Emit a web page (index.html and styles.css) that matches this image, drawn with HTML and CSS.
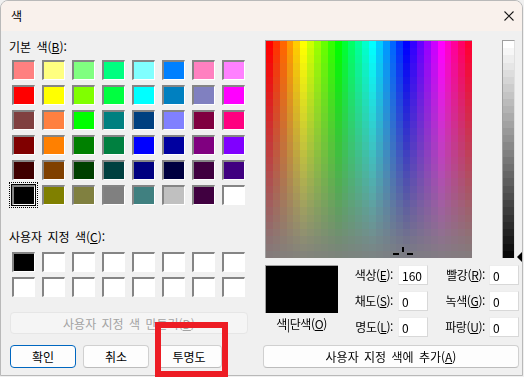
FILE: index.html
```html
<!DOCTYPE html>
<html lang="ko">
<head>
  <meta charset="UTF-8" />
  <title>색</title>
  <link rel="stylesheet" href="styles.css">
</head>
<body>
  <div class="dialog">
    <div class="titlebar">
      <span class="title">색</span>
      <svg class="close" width="10" height="10" viewBox="0 0 10 10">
        <path d="M0.5 0.5 L9.5 9.5 M9.5 0.5 L0.5 9.5" stroke="#1a1a1a" stroke-width="1.1" fill="none" />
      </svg>
    </div>

    <div class="content">
      <!-- left side: swatches -->
      <div class="left">
        <div class="label">기본 색(<u>B</u>):</div>
        <div id="basic" class="swatches basic"></div>
        <div class="label custom-label">사용자 지정 색(<u>C</u>):</div>
        <div id="custom" class="swatches custom"></div>
        <button class="btn wide" disabled>사용자 지정 색 만들기(<u>D</u>)</button>
        <div class="actions">
          <button class="btn default">확인</button>
          <button class="btn">취소</button>
          <button class="btn">투명도</button>
        </div>
      </div>

      <!-- right side: spectrum and values -->
      <div class="right">
        <div class="picker">
          <canvas id="spectrum" class="spectrum" width="206" height="217"></canvas>
          <div class="lum-wrap">
            <canvas id="lum" class="lum" width="11" height="217"></canvas>
            <span class="arrow"></span>
          </div>
        </div>

        <div class="values">
          <div class="preview-col">
            <div class="preview"></div>
            <div class="solid">색|단색(<u>O</u>)</div>
          </div>
          <div class="fields">
            <label>색상(<u>E</u>):</label><input type="text" value="160" />
            <label>빨강(<u>R</u>):</label><input type="text" value="0" />
            <label>채도(<u>S</u>):</label><input type="text" value="0" />
            <label>녹색(<u>G</u>):</label><input type="text" value="0" />
            <label>명도(<u>L</u>):</label><input type="text" value="0" />
            <label>파랑(<u>U</u>):</label><input type="text" value="0" />
          </div>
        </div>

        <button class="btn add">사용자 지정 색에 추가(<u>A</u>)</button>
      </div>
    </div>
  </div>

  <div class="highlight"></div>

  <script>
    // Basic colours
    const basicColors = [
      '#ff8080', '#ffff80', '#80ff80', '#00ff80', '#80ffff', '#0080ff', '#ff80c0', '#ff80ff',
      '#ff0000', '#ffff00', '#80ff00', '#00ff40', '#00ffff', '#0080c0', '#8080c0', '#ff00ff',
      '#804040', '#ff8040', '#00ff00', '#008080', '#004080', '#8080ff', '#800040', '#ff0080',
      '#800000', '#ff8000', '#008000', '#008040', '#0000ff', '#0000a0', '#800080', '#8000ff',
      '#400000', '#804000', '#004000', '#004040', '#000080', '#000040', '#400040', '#400080',
      '#000000', '#808000', '#808040', '#808080', '#408080', '#c0c0c0', '#400040', '#ffffff'
    ];

    const basic = document.getElementById('basic');
    basicColors.forEach((c, i) => {
      const s = document.createElement('span');
      s.className = i === 40 ? 'swatch selected' : 'swatch';
      s.style.background = c;
      basic.appendChild(s);
    });

    const custom = document.getElementById('custom');
    for (let i = 0; i < 16; i++) {
      const s = document.createElement('span');
      s.className = 'swatch';
      s.style.background = i === 0 ? '#000000' : '#ffffff';
      custom.appendChild(s);
    }

    // Hue / saturation spectrum, drawn in blocks like the real dialog
    const sp = document.getElementById('spectrum').getContext('2d');
    const W = 206, H = 217, STEPS = 30;
    for (let c = 0; c < STEPS; c++) {
      const x0 = Math.round(c * W / STEPS), x1 = Math.round((c + 1) * W / STEPS);
      for (let r = 0; r < STEPS; r++) {
        const y0 = Math.round(r * H / STEPS), y1 = Math.round((r + 1) * H / STEPS);
        const hue = c * 8 * 1.5;
        const sat = (240 - r * 8) / 240 * 100;
        sp.fillStyle = `hsl(${hue}, ${sat}%, 50%)`;
        sp.fillRect(x0, y0, x1 - x0, y1 - y0);
      }
    }
    // crosshair at hue 160, sat 0
    sp.fillStyle = '#000';
    sp.fillRect(136, 206, 2, 5);
    sp.fillRect(127, 212, 6, 2);
    sp.fillRect(141, 212, 6, 2);

    // Luminance bar
    const lum = document.getElementById('lum').getContext('2d');
    for (let r = 0; r < STEPS; r++) {
      const y0 = Math.round(r * H / STEPS), y1 = Math.round((r + 1) * H / STEPS);
      const l = (240 - r * 8) / 240 * 100;
      lum.fillStyle = `hsl(0, 0%, ${l}%)`;
      lum.fillRect(0, y0, 11, y1 - y0);
    }
  </script>
</body>
</html>
```

FILE: styles.css
```css
body {
  margin: 0;
  background: #f0f0f0;
  font-family: 'Noto Sans CJK KR', 'Noto Sans', sans-serif;
  font-size: 12px;
  color: #000;
  position: relative;
  width: 524px;
  height: 377px;
  overflow: hidden;
}

.dialog {
  box-sizing: border-box;
  width: 523px;
  height: 376px;
  background: #f0f0f0;
  border: 1px solid #b9b9b9;
  border-radius: 8px 8px 0 0;
  overflow: hidden;
}

.titlebar {
  height: 30px;
  background: #f9f1ec;
  display: flex;
  align-items: center;
  justify-content: space-between;
  padding: 0 8px 0 10px;
}

.title {
  font-size: 12px;
  line-height: 16px;
}

.content {
  display: flex;
  padding: 0 2px 0 8px;
}

.left {
  width: 241px;
  display: flex;
  flex-direction: column;
}

.label {
  margin-top: 8px;
  line-height: 16px;
  word-spacing: 2px;
}

.custom-label {
  margin-top: 24px;
}

.swatches {
  display: grid;
  grid-template-columns: repeat(8, 23px);
  grid-auto-rows: 20px;
  column-gap: 7px;
  row-gap: 5px;
  margin-left: 3px;
  margin-top: 5px;
}

.custom {
  margin-top: 7px;
}

.swatch {
  box-sizing: border-box;
  border-style: solid;
  border-width: 2px 1px 1px 2px;
  border-color: #858585 #ffffff #ffffff #858585;
}

.swatch.selected {
  box-shadow: 0 0 0 1px #000;
  outline: 1px dotted #000;
  outline-offset: 2px;
}

.btn {
  box-sizing: border-box;
  height: 23px;
  padding: 0;
  font-family: inherit;
  font-size: 12px;
  color: #000;
  background: #fdfdfd;
  border: 1px solid #d0d0d0;
  border-bottom-color: #bcbcbc;
  border-radius: 4px;
  word-spacing: 2px;
}

.btn.wide {
  margin: 15px 0 0 1px;
  width: 238px;
  height: 22px;
  background: #f5f5f5;
  border-color: #e6e6e6;
  color: #a3a3a3;
}

.actions {
  display: flex;
  gap: 7px;
  margin: 11px 0 0 1px;
}

.actions .btn {
  width: 66px;
}

.btn.default {
  border-color: #0067c0;
}

.right {
  width: 256px;
  margin-left: 13px;
}

.picker {
  display: flex;
  margin-top: 9px;
}

.spectrum {
  display: block;
  margin-left: 2px;
  border-top: 1px solid #a0a0a0;
  border-left: 1px solid #a0a0a0;
}

.lum-wrap {
  display: flex;
  align-items: flex-end;
  margin-left: 30px;
}

.lum {
  display: block;
  border: 1px solid #a0a0a0;
  border-right-color: #e0e0e0;
  border-bottom: none;
}

.arrow {
  width: 0;
  height: 0;
  margin-left: 2px;
  margin-bottom: -5px;
  border-top: 6px solid transparent;
  border-bottom: 6px solid transparent;
  border-right: 6px solid #000;
}

.values {
  display: flex;
  margin-top: 7px;
}

.preview-col {
  width: 73px;
  margin-left: 2px;
}

.preview {
  width: 72px;
  height: 47px;
  background: #000;
  border-top: 1px solid #a0a0a0;
  border-left: 1px solid #a0a0a0;
}

.solid {
  margin-top: 3px;
  line-height: 16px;
  text-align: center;
  letter-spacing: -0.4px;
}

.fields {
  display: grid;
  grid-template-columns: 60px 30px 61px 30px;
  grid-auto-rows: 20px;
  row-gap: 6px;
}

.fields label {
  text-align: right;
  padding-right: 5px;
  line-height: 20px;
  letter-spacing: -0.4px;
}

.fields label:nth-of-type(even) {
  padding-right: 4px;
}

.fields input {
  box-sizing: border-box;
  width: 30px;
  height: 20px;
  padding: 0 0 0 3px;
  font-family: inherit;
  font-size: 12px;
  background: #fff;
  border: 1px solid #ededed;
  border-right-color: #d8d8d8;
  border-bottom-color: #d8d8d8;
  outline: none;
}

.btn.add {
  display: block;
  width: 256px;
  margin-top: 8px;
}

.highlight {
  position: absolute;
  left: 155px;
  top: 322px;
  width: 73px;
  height: 55px;
  box-sizing: border-box;
  border: 6px solid #ed1c24;
}
```
